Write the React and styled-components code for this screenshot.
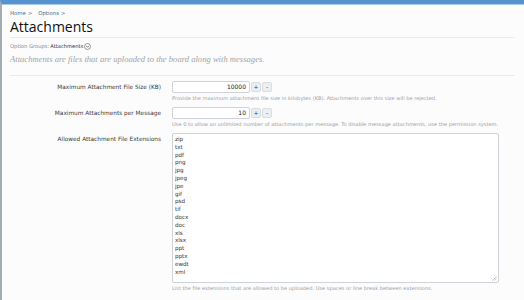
import React from 'react'
import styled, {createGlobalStyle} from 'styled-components'

const GlobalStyle = createGlobalStyle`
  body {
    margin: 0;
    background: #fcfcfd;
    font-family: "DejaVu Sans", Verdana, sans-serif;
  }
`

const Page = styled.div`
  min-height: 300px;
  box-sizing: border-box;
  border-top: 4px solid #5592cf;
  border-left: 2px solid #a3abb3;
  box-shadow: inset 0 1px 0 #a9cbea;
  padding: 0 9px 0 8px;
`

const Breadcrumb = styled.div`
  padding-top: 5px;
  font-size: 5.4px;
  line-height: 8px;
  color: #476c8e;
  span { margin-right: 6px; }
`

const Title = styled.h1`
  margin: 1px 0 0;
  font-family: "Open Sans", sans-serif;
  font-weight: 400;
  font-size: 14px;
  line-height: 18px;
  color: #111;
  padding-bottom: 1px;
  border-bottom: 1px solid #e6ecf0;
`

const Groups = styled.div`
  margin-top: 5px;
  font-size: 5.2px;
  line-height: 7px;
  color: #888;
  display: flex;
  align-items: center;
  gap: 1px;
  b { color: #333; font-weight: 400; }
`

const Desc = styled.p`
  margin: 4px 0 0;
  font-family: "Liberation Serif", "Times New Roman", serif;
  font-style: italic;
  font-size: 8.6px;
  line-height: 10px;
  color: #a3a3a3;
  padding-bottom: 11px;
  border-bottom: 1px solid #e6ecf0;
`

const Form = styled.div`
  padding-top: 5px;
  display: grid;
  grid-template-columns: 154px 1fr;
  column-gap: 8px;
  row-gap: 5px;
`

const Label = styled.div`
  text-align: right;
  font-size: 5.8px;
  color: #3a3a3a;
  padding-top: 3px;
  padding-right: 3px;
`

const Control = styled.div`
  display: flex;
  flex-direction: column;
  gap: 2px;
`

const SpinRow = styled.div`
  display: flex;
  align-items: center;
  gap: 1px;
`

const NumInput = styled.div`
  box-sizing: border-box;
  width: 78px;
  height: 12px;
  border: 1px solid #cdd3d8;
  border-radius: 2px;
  background: #fff;
  font-size: 6px;
  color: #222;
  text-align: right;
  line-height: 10px;
  padding-right: 3px;
`

const Spin = styled.div`
  box-sizing: border-box;
  width: 10px;
  height: 10px;
  border: 1px solid #d8dde1;
  border-radius: 2px;
  background: #eceff1;
  font-size: 6px;
  line-height: 8px;
  text-align: center;
  color: #444;
`

const Hint = styled.div`
  font-size: 5.1px;
  color: #a0a0a0;
  line-height: 7px;
`

const Area = styled.div`
  position: relative;
  box-sizing: border-box;
  width: 327px;
  height: 150px;
  border: 1px solid #cdd3d8;
  border-radius: 2px;
  background: #fff;
  padding: 2px 2px;
  font-size: 5.6px;
  line-height: 7.8px;
  color: #333;
  white-space: pre;
`

const Grip = styled.svg`
  position: absolute;
  right: 1px;
  bottom: 1px;
`

const exts = ['zip', 'txt', 'pdf', 'png', 'jpg', 'jpeg', 'jpe', 'gif', 'psd', 'tif', 'docx', 'doc', 'xls', 'xlsx', 'ppt', 'pptx', 'ewdt', 'xml']

const App = () => {
  return (
    <Page>
      <GlobalStyle />
      <Breadcrumb><span>Home &gt;</span><span>Options &gt;</span></Breadcrumb>
      <Title>Attachments</Title>
      <Groups>
        Option Groups: <b>Attachments</b>
        <svg width="7" height="7" viewBox="0 0 8 8">
          <circle cx="4" cy="4" r="3.4" fill="#fff" stroke="#555" strokeWidth="0.7" />
          <path d="M2.4 3.3 L4 4.9 L5.6 3.3" fill="none" stroke="#333" strokeWidth="0.8" />
        </svg>
      </Groups>
      <Desc>Attachments are files that are uploaded to the board along with messages.</Desc>
      <Form>
        <Label>Maximum Attachment File Size (KB)</Label>
        <Control>
          <SpinRow>
            <NumInput>10000</NumInput>
            <Spin>+</Spin>
            <Spin>-</Spin>
          </SpinRow>
          <Hint>Provide the maximum attachment file size in kilobytes (KB). Attachments over this size will be rejected.</Hint>
        </Control>
        <Label>Maximum Attachments per Message</Label>
        <Control>
          <SpinRow>
            <NumInput>10</NumInput>
            <Spin>+</Spin>
            <Spin>-</Spin>
          </SpinRow>
          <Hint>Use 0 to allow an unlimited number of attachments per message. To disable message attachments, use the permission system.</Hint>
        </Control>
        <Label>Allowed Attachment File Extensions</Label>
        <Control>
          <Area>
            {exts.join('\n')}
            <Grip width="5" height="5" viewBox="0 0 5 5">
              <path d="M4.5 0.5 L0.5 4.5 M4.5 2.5 L2.5 4.5" stroke="#999" strokeWidth="0.6" />
            </Grip>
          </Area>
          <Hint>List the file extensions that are allowed to be uploaded. Use spaces or line break between extensions.</Hint>
        </Control>
      </Form>
    </Page>
  )
}

export default App
